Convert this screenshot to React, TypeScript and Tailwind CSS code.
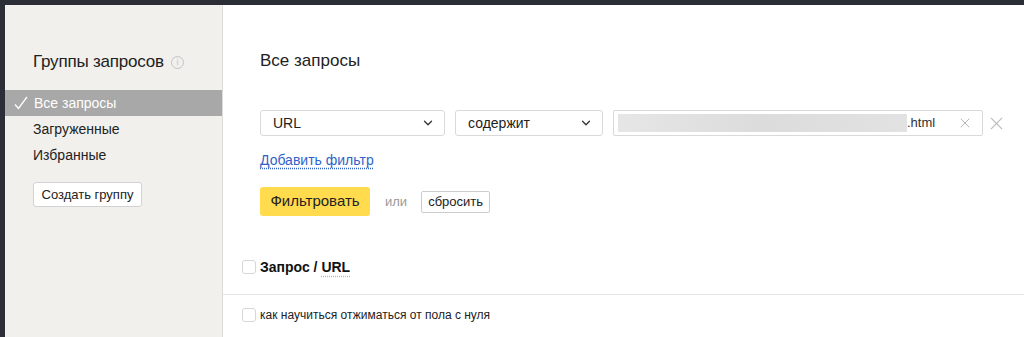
import { ChevronDown } from "lucide-react";

const font = { fontFamily: '"Liberation Sans", Arial, sans-serif' };

const Cross = ({ size, color, width }: { size: number; color: string; width: number }) => (
  <svg width={size} height={size} viewBox="0 0 14 14" fill="none">
    <path d="M1 1L13 13M13 1L1 13" stroke={color} strokeWidth={width} />
  </svg>
);

const Checkbox = () => (
  <span className="block h-[14px] w-[14px] shrink-0 rounded-[3px] border border-[#d6d6d6] bg-white" />
);

function Sidebar() {
  return (
    <aside className="flex w-[218px] shrink-0 flex-col border-r border-[#dedcd8] bg-[#f1f0ed] pt-[45px]">
      <div className="flex h-[24px] items-center pl-[28px] text-[17px] tracking-[-0.2px] text-[#222]">
        Группы запросов
        <span className="ml-[7px] flex h-[13px] w-[13px] items-center justify-center rounded-full border border-[#c4c4c4] text-[9px] leading-none text-[#c4c4c4]">
          i
        </span>
      </div>
      <nav className="mt-[16px] flex flex-col text-[14px]">
        <div className="flex h-[26px] items-center bg-[#a8a8a8] text-white">
          <svg className="ml-[9px] mr-[6px]" width="14" height="14" viewBox="0 0 14 14" fill="none">
            <path d="M1 8.5L4.5 12.5L13 1" stroke="white" strokeWidth="1.3" />
          </svg>
          Все запросы
        </div>
        <div className="flex h-[26px] items-center pl-[28px] text-[#222]">Загруженные</div>
        <div className="flex h-[26px] items-center pl-[28px] text-[#222]">Избранные</div>
      </nav>
      <button className="ml-[28px] mt-[14px] h-[25px] w-[109px] rounded-[3px] border border-[#d2d2d2] bg-white text-[13px] text-[#222]">
        Создать группу
      </button>
    </aside>
  );
}

function Select({ label, width }: { label: string; width: string }) {
  return (
    <div className={`flex h-[26px] ${width} items-center justify-between rounded-[3px] border border-[#d9d9d9] bg-white pl-[12px] pr-[9px] text-[14px] text-[#222]`}>
      {label}
      <ChevronDown size={14} strokeWidth={2.2} color="#333" />
    </div>
  );
}

function Main() {
  return (
    <main className="flex flex-1 flex-col bg-white pt-[44px]">
      <div className="pl-[37px]">
        <h1 className="h-[24px] text-[17px] leading-[24px] text-[#222]">Все запросы</h1>
        <div className="mt-[37px] flex items-center gap-[10px]">
          <Select label="URL" width="w-[185px]" />
          <Select label="содержит" width="w-[148px]" />
          <div className="flex h-[26px] w-[370px] items-center rounded-[2px] border border-[#d9d9d9] pl-[4px] pr-[12px]">
            <div className="h-[18px] w-[289px] bg-gradient-to-r from-[#e6e6e6] via-[#dcdcdc] to-[#e2e2e2]" />
            <span className="text-[13px] text-[#333]">.html</span>
            <span className="ml-auto">
              <Cross size={10} color="#aaa" width={1.2} />
            </span>
          </div>
          <span className="ml-[-3px]">
            <Cross size={13} color="#bbb" width={1.3} />
          </span>
        </div>
        <a className="mt-[15px] block h-[18px] w-fit text-[14px] leading-[18px] text-[#2f63c9] underline decoration-dotted underline-offset-[3px]">
          Добавить фильтр
        </a>
        <div className="mt-[18px] flex items-center">
          <button className="h-[29px] w-[110px] rounded-[3px] bg-[#ffdb4d] text-[15px] text-[#222]">Фильтровать</button>
          <span className="ml-[15px] text-[13px] text-[#999]">или</span>
          <button className="ml-[14px] h-[22px] w-[69px] rounded-[2px] border border-[#ccc] bg-white text-[13px] text-[#222]">
            сбросить
          </button>
        </div>
      </div>
      <div className="mt-[39px] flex h-[40px] items-start border-b border-[#e6e6e6] pl-[19px]">
        <div className="flex h-[24px] items-center gap-[4px]">
          <Checkbox />
          <span className="text-[14px] font-bold text-[#111]">
            Запрос /{" "}
            <span className="underline decoration-dotted decoration-[#bbb] underline-offset-[4px]">URL</span>
          </span>
        </div>
      </div>
      <div className="mt-[12px] flex h-[16px] items-center gap-[4px] pl-[19px]">
        <Checkbox />
        <span className="text-[12px] leading-[16px] text-[#222]">как научиться отжиматься от пола с нуля</span>
      </div>
    </main>
  );
}

export default function App() {
  return (
    <div className="h-[337px] w-[1024px] overflow-hidden bg-[#2b2e36] pl-[5px] pt-[5px]" style={font}>
      <div className="flex h-[332px]">
        <Sidebar />
        <Main />
      </div>
    </div>
  );
}
